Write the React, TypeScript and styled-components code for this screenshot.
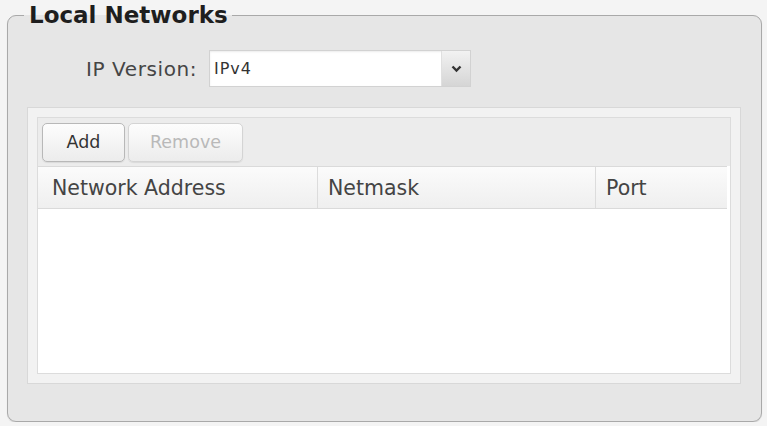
import React from "react";
import styled, { createGlobalStyle } from "styled-components";

const Global = createGlobalStyle`
  html, body { margin: 0; padding: 0; background: #f4f4f4; }
  body { font-family: "DejaVu Sans", "Liberation Sans", sans-serif; }
  * { box-sizing: border-box; }
`;

const Fieldset = styled.fieldset`
  margin: 2px 0 0 7px;
  width: 755px;
  padding: 22px 20px 37px 19px;
  border: 1px solid #a9a9a9;
  border-radius: 9px;
  background: #e6e6e6;
  box-shadow: 0 1px 1px rgba(0, 0, 0, 0.12);
  min-width: 0;
`;

const Legend = styled.legend`
  margin-left: -3px;
  padding: 0 4px 0 5px;
  font-size: 23px;
  line-height: 26px;
  font-weight: bold;
  color: #1e1e1e;
`;

const Row = styled.div`
  display: flex;
  align-items: center;
  gap: 7px;
  padding-left: 59px;
  height: 37px;
`;

const Label = styled.label`
  width: 116px;
  font-size: 20px;
  color: #454545;
  white-space: nowrap;
  letter-spacing: 0.6px;
`;

const Select = styled.div`
  display: flex;
  width: 262px;
  height: 37px;
  border: 1px solid #d2d2d2;
  background: #fff;
  box-shadow: inset 0 1px 2px rgba(0, 0, 0, 0.08);
`;

const SelectValue = styled.div`
  flex: 1;
  display: flex;
  align-items: center;
  padding-left: 4px;
  font-size: 16px;
  letter-spacing: 1px;
  color: #333;
`;

const SelectArrow = styled.div`
  width: 29px;
  display: flex;
  align-items: center;
  justify-content: center;
  border-left: 1px solid #e0e0e0;
  background: linear-gradient(#f2f2f2, #d5d5d5);
`;

const Panel = styled.div`
  margin-top: 20px;
  height: 277px;
  border: 1px solid #d8d8d8;
  background: #f2f2f2;
  padding: 9px;
  display: flex;
`;

const Grid = styled.div`
  flex: 1;
  display: flex;
  flex-direction: column;
  border: 1px solid #dcdcdc;
  background: #fff;
`;

const Toolbar = styled.div`
  height: 48px;
  display: flex;
  align-items: center;
  gap: 3px;
  padding: 0 4px;
  background: #ececec;
`;

const Button = styled.button<{ $disabled?: boolean; $w: number }>`
  width: ${(p) => p.$w}px;
  height: 39px;
  border: 1px solid ${(p) => (p.$disabled ? "#d4d4d4" : "#b8b8b8")};
  border-radius: 5px;
  background: linear-gradient(#fdfdfd, #ececec);
  font-family: "DejaVu Sans", "Liberation Sans", sans-serif;
  font-size: 17.5px;
  color: ${(p) => (p.$disabled ? "#b9b9b9" : "#333")};
  padding: 0;
  box-shadow: 0 1px 1px rgba(0, 0, 0, 0.08);
`;

const Header = styled.div`
  height: 43px;
  display: flex;
  border-top: 1px solid #dadada;
  border-bottom: 1px solid #dadada;
  background: linear-gradient(#fbfbfb, #efefef);
  margin-right: 3px;
`;

const HeaderCell = styled.div<{ $w?: number; $pl: number }>`
  ${(p) => (p.$w ? `width: ${p.$w}px;` : "flex: 1;")}
  display: flex;
  align-items: center;
  padding-left: ${(p) => p.$pl}px;
  font-size: 20.5px;
  color: #444;
  border-right: 1px solid #dcdcdc;
  &:last-child { border-right: none; }
`;

const Body = styled.div`
  flex: 1;
  background: #fff;
`;

export default function App() {
  return (
    <>
      <Global />
      <Fieldset>
        <Legend>Local Networks</Legend>
        <Row>
          <Label>IP Version:</Label>
          <Select>
            <SelectValue>IPv4</SelectValue>
            <SelectArrow>
              <svg width="11" height="8" viewBox="0 0 11 8">
                <path d="M1.5 1.5 L5.5 5.5 L9.5 1.5" fill="none" stroke="#333" strokeWidth="2.4" />
              </svg>
            </SelectArrow>
          </Select>
        </Row>
        <Panel>
          <Grid>
            <Toolbar>
              <Button $w={83}>Add</Button>
              <Button $w={115} $disabled>Remove</Button>
            </Toolbar>
            <Header>
              <HeaderCell $w={280} $pl={14}>Network Address</HeaderCell>
              <HeaderCell $w={278} $pl={10}>Netmask</HeaderCell>
              <HeaderCell $pl={10}>Port</HeaderCell>
            </Header>
            <Body />
          </Grid>
        </Panel>
      </Fieldset>
    </>
  );
}
